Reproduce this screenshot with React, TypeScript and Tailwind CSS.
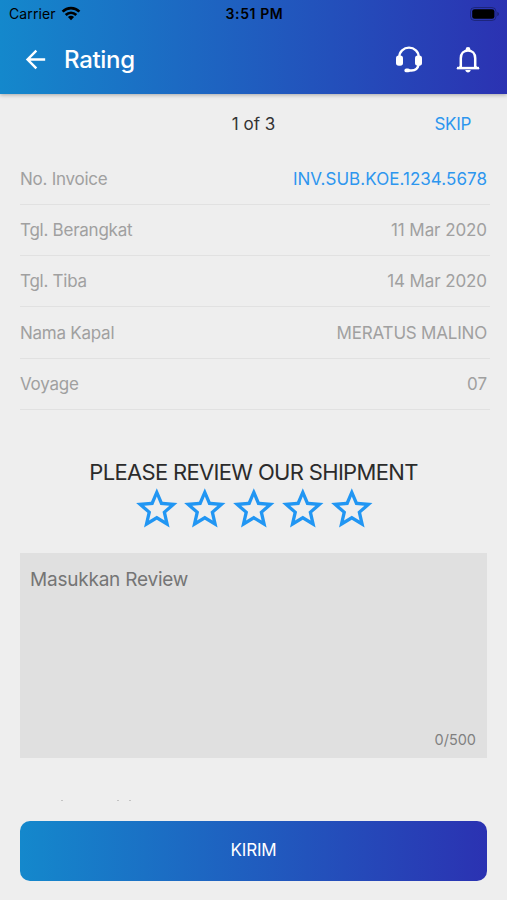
import React, { useState } from 'react'
import { MdArrowBack, MdStarBorder } from 'react-icons/md'

const details = [
  { label: 'No. Invoice', value: 'INV.SUB.KOE.1234.5678', valueClass: 'text-[#2d96ee] tracking-[0.05px]' },
  { label: 'Tgl. Berangkat', value: '11 Mar 2020', valueClass: 'tracking-[-0.08px]' },
  { label: 'Tgl. Tiba', value: '14 Mar 2020', valueClass: 'tracking-[-0.1px]' },
  { label: 'Nama Kapal', value: 'MERATUS MALINO', valueClass: 'tracking-[-0.2px]' },
  { label: 'Voyage', value: '07', valueClass: '' },
]

const WifiIcon = () => (
  <svg width="20" height="15" viewBox="0 0 20 15" fill="none" stroke="black" strokeWidth="2.7">
    <path d="M1.6 5.6C6.4 1 13.6 1 18.4 5.6" />
    <path d="M4.7 9C7.8 6.1 12.2 6.1 15.3 9" />
    <path d="M10 14.2 6.9 11C8.6 9.4 11.4 9.4 13.1 11Z" fill="black" stroke="none" />
  </svg>
)

const BatteryIcon = () => (
  <svg width="30" height="14" viewBox="0 0 30 14">
    <rect x="0.5" y="0.5" width="25.5" height="13" rx="4" fill="none" stroke="black" strokeOpacity="0.3" />
    <rect x="2.2" y="2.2" width="22.2" height="9.6" rx="2.4" fill="black" />
    <path d="M27.4 5v4c.9-.3 1.4-1.1 1.4-2s-.5-1.7-1.4-2Z" fill="black" fillOpacity="0.4" />
  </svg>
)

const HeadsetIcon = () => (
  <svg width="28" height="28" viewBox="0 0 28 28" fill="none" stroke="white" strokeWidth="2.3">
    <path d="M4.3 11v-.2a9.7 9.2 0 0 1 19.4 0V11" />
    <path d="M23.7 18.5c-.8 4-3.4 6-7.2 6h-4" strokeLinecap="round" />
    <rect x="1" y="9.6" width="7" height="10.2" rx="2.8" fill="white" stroke="none" />
    <rect x="20" y="9.6" width="7" height="10.2" rx="2.8" fill="white" stroke="none" />
    <rect x="9.4" y="22.4" width="5.6" height="3.9" rx="1.9" fill="white" stroke="none" />
  </svg>
)

const BellIcon = () => (
  <svg width="24" height="28" viewBox="0 0 24 28" fill="none" stroke="white" strokeWidth="2.5">
    <path d="M4.8 22V12.3c0-4.6 3-7.7 7.2-7.7s7.2 3.1 7.2 7.7V22" />
    <path d="M4.8 20.5 2.6 22h18.8l-2.2-1.5" strokeWidth="1.6" />
    <path d="M1 22.1h22" />
    <path d="M9.6 4.5v-1a2.4 2.4 0 0 1 4.8 0v1Z" fill="white" stroke="none" />
    <path d="M9.3 24h5.4c-.2 1.5-1.4 2.4-2.7 2.4s-2.500-.9-2.700-2.400Z" fill="white" stroke="none" />
  </svg>
)

const App = () => {
  const [review, setReview] = useState('')

  return (
    <div className="flex flex-col w-[507px] h-[900px] overflow-hidden bg-[#eeeeee] font-['Inter',sans-serif]">
      <header className="shrink-0 h-[94px] bg-[linear-gradient(90deg,#1488cc,#2b32b2)] shadow-[0_1px_4px_rgba(0,0,0,0.3)]">
        <div className="grid grid-cols-3 items-center h-[27px] pl-[9px] pr-[7px] text-black">
          <div className="flex items-center gap-[5px]">
            <span className="text-[14px] leading-[14px] mt-px tracking-[0.1px]">Carrier</span>
            <WifiIcon />
          </div>
          <span className="text-center text-[14px] leading-[14px] mt-px font-semibold tracking-[0.6px]">3:51 PM</span>
          <div className="flex justify-end">
            <BatteryIcon />
          </div>
        </div>
        <div className="flex items-center h-[65px] pl-[21px] pr-[27px] text-white">
          <MdArrowBack size={29} />
          <h1 className="ml-[14px] mt-px text-[24px] font-medium tracking-[-0.3px]">Rating</h1>
          <div className="flex items-center gap-[33px] ml-auto">
            <HeadsetIcon />
            <BellIcon />
          </div>
        </div>
      </header>

      <main className="flex flex-col h-[708px] shrink-0 overflow-hidden">
        <div className="grid grid-cols-3 items-center h-[59.5px] pt-px shrink-0 text-[17px]">
          <span className="col-start-2 text-center text-[#333333]">1 of 3</span>
          <button className="justify-self-end mr-[36px] text-[#2d96ee] tracking-[-0.3px]">SKIP</button>
        </div>

        <div className="shrink-0 pl-[20px] pr-[17px]">
          {details.map((item) => (
            <div
              key={item.label}
              className="flex items-center justify-between h-[51.3px] pt-[2px] pr-[3px] border-b border-[#e1e1e1] text-[17px] text-[#a0a0a0]"
            >
              <span className="tracking-[-0.25px]">{item.label}</span>
              <span className={item.valueClass}>{item.value}</span>
            </div>
          ))}
        </div>

        <h2 className="shrink-0 mt-[46.5px] h-[32px] leading-[32px] text-center text-[22px] tracking-[-0.67px] text-[#2b2b2b]">
          PLEASE REVIEW OUR SHIPMENT
        </h2>
        <div className="shrink-0 flex justify-center pl-px h-[47px] -mt-[4px] text-[#2196f3]">
          {[1, 2, 3, 4, 5].map((n) => (
            <MdStarBorder key={n} size={49.6} className="shrink-0 -mx-[0.4px]" />
          ))}
        </div>

        <div className="shrink-0 flex flex-col mt-[22px] mx-[20px] h-[205px] bg-[#e0e0e0]">
          <textarea
            placeholder="Masukkan Review"
            value={review}
            maxLength={500}
            onChange={(e) => setReview(e.target.value)}
            className="flex-1 resize-none outline-none px-[10px] pt-[13px] text-[19px] tracking-[-0.22px] text-[#333333] placeholder:text-[#757575]"
          />
          <span className="self-end mr-[11px] mb-[8px] text-[14.5px] leading-[20px] text-[#808080]">{review.length}/500</span>
        </div>

        {/* tops of the next field's letters, cut off by the scroll area */}
        <div className="shrink-0 flex mt-[42px] h-px">
          <span className="ml-[61px] w-[2px] bg-[#c4c4c4]" />
          <span className="ml-[54px] w-[2px] bg-[#c4c4c4]" />
          <span className="ml-[10px] w-[2px] bg-[#c4c4c4]" />
        </div>
      </main>

      <footer className="shrink-0 px-[20px] pt-[19px]">
        <button className="w-full h-[60px] rounded-[10px] bg-[linear-gradient(90deg,#1488cc,#2b32b2)] text-[17px] tracking-[-0.2px] text-white">
          KIRIM
        </button>
      </footer>
    </div>
  )
}

export default App
